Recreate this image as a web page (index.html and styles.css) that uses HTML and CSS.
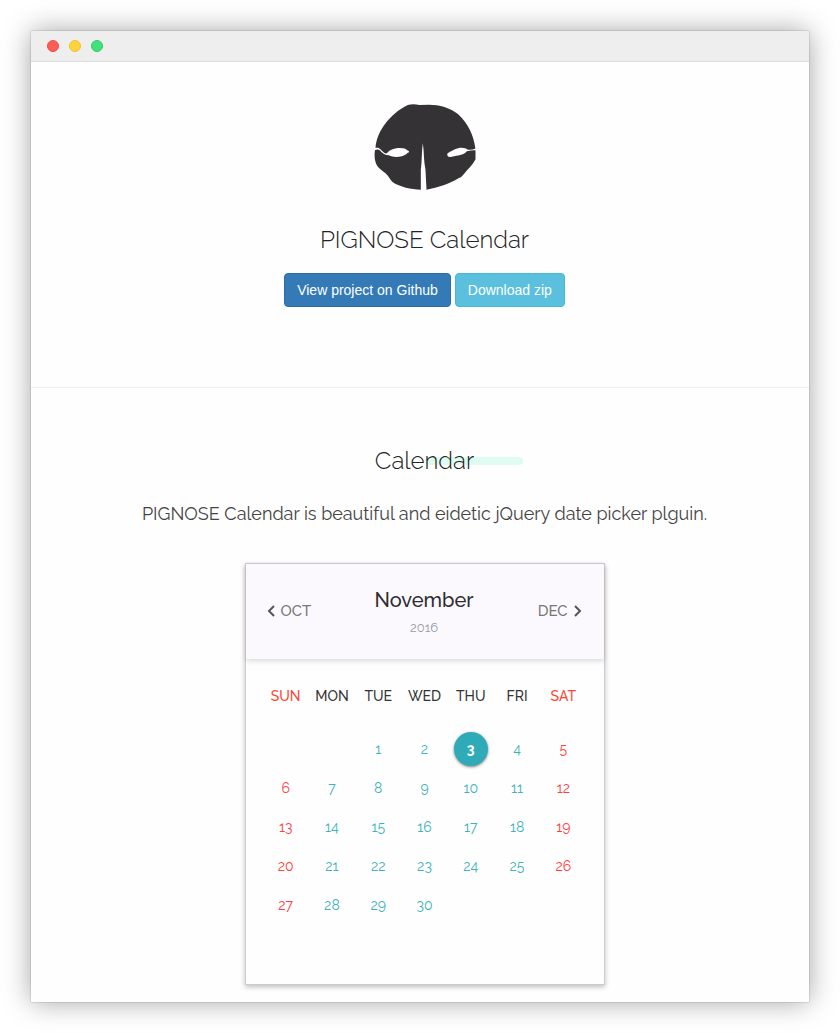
FILE: index.html
```html
<!DOCTYPE html>
<html lang="en">
<head>
<meta charset="utf-8">
<meta name="viewport" content="width=device-width, initial-scale=1">
<title>PIGNOSE Calendar</title>
<link rel="stylesheet" href="styles.css">
</head>
<body>
<div class="window">
  <div class="titlebar">
    <span class="dot dot-close"></span>
    <span class="dot dot-minimize"></span>
    <span class="dot dot-zoom"></span>
  </div>
  <header class="hero">
    <svg class="logo" viewBox="42 42 309 258" aria-hidden="true">
      <path fill="#353235" d="M48 173C50 148 60 124 76 103C94 78 118 58 145 45Q160 40 180 45L208 44C240 44 272 53 296 73C325 99 343 136 348 178V208C339 226 325 238 314 251Q307 261 297 265C270 281 236 293 201 299L198 240C192 211 194 184 190 160C186 184 188 211 184 240L184 299C155 299 121 291 100 277C91 269 88 259 78 250C65 239 52 232 48 216Q43 197 47 178Z"/>
      <path fill="#fefefe" d="M43 173L56 173Q63 176 69 184Q75 192 82 190C91 178 106 174 122 174Q138 174 143 181Q150 183 149 187Q144 187 141 192C128 201 105 205 88 196Q72 196 61 181Q55 176 45 181ZM350 175V181Q337 180 322 184C311 197 295 196 277 200Q264 203 263 194C264 187 277 184 286 178C300 171 316 172 325 179Q337 181 350 175Z"/>
    </svg>
    <h1 class="title">PIGNOSE Calendar</h1>
    <div class="actions">
      <a class="button button-primary" href="#github">View project on Github</a>
      <a class="button button-info" href="#download">Download zip</a>
    </div>
  </header>
  <main class="demo">
    <h2 class="title heading">Calendar</h2>
    <p class="lead">PIGNOSE Calendar is beautiful and eidetic jQuery date picker plguin.</p>
    <section class="calendar" aria-label="November 2016">
      <div class="calendar-top">
        <button class="nav" type="button">
          <svg class="chevron" viewBox="0 0 8 12" aria-hidden="true"><path d="M7 1L2 6L7 11"/></svg>
          OCT
        </button>
        <div class="current">
          <strong class="month">November</strong>
          <span class="year">2016</span>
        </div>
        <button class="nav nav-next" type="button">
          DEC
          <svg class="chevron" viewBox="0 0 8 12" aria-hidden="true"><path d="M1 1L6 6L1 11"/></svg>
        </button>
      </div>
      <table class="days">
        <thead>
          <tr><th>SUN</th><th>MON</th><th>TUE</th><th>WED</th><th>THU</th><th>FRI</th><th>SAT</th></tr>
        </thead>
        <tbody>
          <tr><td></td><td></td><td>1</td><td>2</td><td><span class="selected">3</span></td><td>4</td><td>5</td></tr>
          <tr><td>6</td><td>7</td><td>8</td><td>9</td><td>10</td><td>11</td><td>12</td></tr>
          <tr><td>13</td><td>14</td><td>15</td><td>16</td><td>17</td><td>18</td><td>19</td></tr>
          <tr><td>20</td><td>21</td><td>22</td><td>23</td><td>24</td><td>25</td><td>26</td></tr>
          <tr><td>27</td><td>28</td><td>29</td><td>30</td><td></td><td></td><td></td></tr>
        </tbody>
      </table>
    </section>
  </main>
</div>
</body>
</html>
```
FILE: styles.css
```css
* { box-sizing: border-box; }

body {
  margin: 0;
  padding: 31px;
  background: #fff;
  color: #222;
  font-family: Raleway, Lato, "Open Sans", sans-serif;
  font-variant-numeric: oldstyle-nums;
}

.window {
  position: relative;
  z-index: 0;
  background: #fefefe;
  box-shadow: 0 0 1px rgba(0, 0, 0, 0.5), 0 0 26px rgba(0, 0, 0, 0.36);
}

.titlebar {
  display: flex;
  align-items: center;
  gap: 10px;
  height: 31px;
  padding: 0 16px;
  background: #eee;
  border-bottom: 1px solid #ddd;
}

.dot {
  width: 12px;
  height: 12px;
  border: 1px solid;
  border-radius: 50%;
}
.dot-close { background: #ff5c54; border-color: #e8504a; }
.dot-minimize { background: #ffd43b; border-color: #efc130; }
.dot-zoom { background: #41e27b; border-color: #38c968; }

.hero,
.demo {
  display: flex;
  flex-direction: column;
  align-items: center;
  padding-left: 9px;
}

.hero {
  padding-top: 42px;
  padding-bottom: 80px;
  border-bottom: 1px solid #eee;
}

.logo {
  width: 104px;
  height: 86px;
}

.title {
  margin: 0;
  font-size: 24px;
  line-height: 30px;
  font-weight: 300;
}
.hero .title { margin: 35px 0 18px; }

.actions { display: flex; gap: 4px; }

.button {
  padding: 6px 12px;
  border: 1px solid;
  border-radius: 4px;
  color: #fff;
  font: 14px/20px "Liberation Sans", Arial, sans-serif;
  text-decoration: none;
}
.button-primary { background: #337ab7; border-color: #2e6da4; }
.button-info { background: #5bc0de; border-color: #46b8da; }

.demo {
  padding-top: 58px;
  padding-bottom: 17px;
}

.heading { position: relative; }
.heading::after {
  content: "";
  position: absolute;
  z-index: -1;
  left: 50%;
  top: 11px;
  width: 98px;
  height: 8px;
  border-radius: 4px;
  background: #dffcf3;
}

.lead {
  margin: 25px 0 36px;
  font-size: 18px;
  line-height: 26px;
  font-weight: 400;
  color: #444;
}

.calendar {
  width: 100%;
  max-width: 360px;
  border: 1px solid #cdcad2;
  background: #fefefe;
  box-shadow: 0 2px 5px rgba(0, 0, 0, 0.25);
}

.calendar-top {
  display: grid;
  grid-template-columns: 1fr auto 1fr;
  align-items: center;
  height: 95px;
  padding: 0 22px 0 21px;
  background: #fbf9fd;
  box-shadow: 0 2px 5px rgba(0, 0, 0, 0.15);
}

.nav {
  display: flex;
  align-items: center;
  gap: 6px;
  padding: 0 0 2px;
  border: 0;
  background: none;
  color: #777;
  font: inherit;
  font-size: 15px;
  line-height: 20px;
  font-weight: 500;
}
.nav-next { justify-self: end; }

.chevron {
  width: 8px;
  height: 12px;
  fill: none;
  stroke: #555;
  stroke-width: 2;
}

.current {
  display: flex;
  flex-direction: column;
  align-items: center;
  gap: 6px;
  padding-top: 2px;
}
.month {
  font-size: 20px;
  line-height: 24px;
  font-weight: 500;
  color: #2f2c31;
}
.year {
  font-size: 13px;
  line-height: 20px;
  color: #99a;
}

.days {
  width: calc(100% - 34px);
  margin: 3px 17px 59px;
  table-layout: fixed;
  border-collapse: collapse;
  text-align: center;
}
.days th {
  height: 68px;
  padding: 0;
  color: #333;
  font-size: 14px;
  font-weight: 500;
}
.days td {
  height: 39px;
  padding: 0 0 1px;
  color: #3fb3b9;
  font-size: 14px;
  font-weight: 400;
}
.days th:first-child,
.days th:last-child { color: #ff4532; }
.days td:first-child,
.days td:last-child { color: #ff4040; }

.selected {
  display: block;
  width: 34px;
  margin: 0 auto;
  border-radius: 50%;
  background: #2fabb7;
  box-shadow: 0 1px 3px rgba(0, 0, 0, 0.5);
  color: #fff;
  font-weight: 700;
  line-height: 34px;
}
```
